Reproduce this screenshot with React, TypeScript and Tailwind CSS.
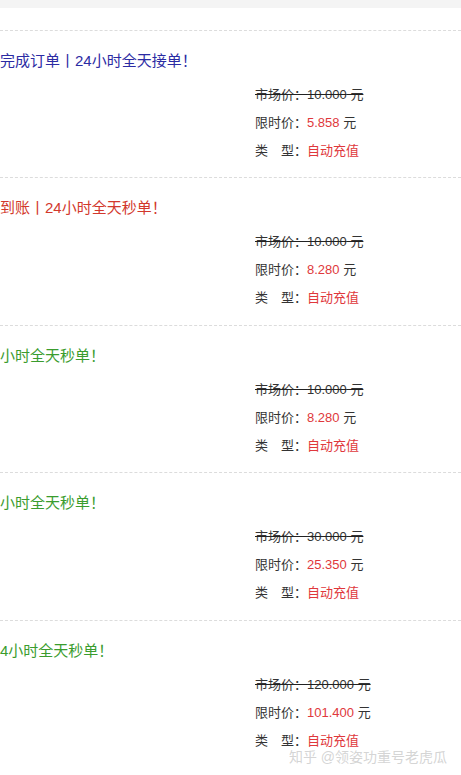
import React from 'react'

type Item = { title: string; color: string; market: string; price: string }

const items: Item[] = [
  { title: '完成订单丨24小时全天接单！', color: 'text-[#2b2ba3]', market: '10.000', price: '5.858' },
  { title: '到账丨24小时全天秒单！', color: 'text-[#d2382c]', market: '10.000', price: '8.280' },
  { title: '小时全天秒单！', color: 'text-[#3a9c2e]', market: '10.000', price: '8.280' },
  { title: '小时全天秒单！', color: 'text-[#3a9c2e]', market: '30.000', price: '25.350' },
  { title: '4小时全天秒单！', color: 'text-[#3a9c2e]', market: '120.000', price: '101.400' },
]

function Row({ item }: { item: Item }): React.ReactElement {
  return (
    <div className="h-[147.4px] border-t border-dashed border-[#dcdcdc] pt-[20px]">
      <p className={`text-[15px] leading-[20px] whitespace-nowrap ${item.color}`}>{item.title}</p>
      <div className="mt-[10px] pl-[255px] text-[13px] leading-[28px] text-[#333]">
        <p className="line-through decoration-[#222]">市场价：{item.market} 元</p>
        <p>限时价：<span className="text-[#e0383c]">{item.price}</span> 元</p>
        <p>类　型：<span className="text-[#e0383c]">自动充值</span></p>
      </div>
    </div>
  )
}

export default function App(): React.ReactElement {
  return (
    <div className="relative w-[461px] h-[775px] overflow-hidden bg-white" style={{ fontFamily: '"Liberation Sans", "Noto Sans CJK SC", sans-serif' }}>
      <div className="h-[8px] bg-[#f4f4f4]" />
      <div className="h-[22px]" />
      {items.map((it, i) => <Row key={i} item={it} />)}
      {/* watermark */}
      <p className="absolute right-[14px] top-[749px] text-[14px] leading-[16px] text-[#d0d0d0]/90 whitespace-nowrap">知乎 @领姿功重号老虎瓜</p>
    </div>
  )
}
